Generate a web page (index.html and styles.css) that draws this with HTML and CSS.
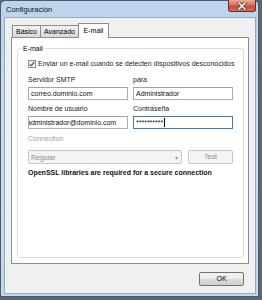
FILE: index.html
```html
<!DOCTYPE html>
<html>
	<head>
		<title>Configuración</title>
		<link rel="stylesheet" href="styles.css">
	</head>
	<body>
		<div class="window">
			<div class="titlebar">
				<span class="title">Configuración</span>
				<div class="close">
					<svg width="10" height="8" viewBox="0 0 10 8">
						<path d="M2 1 L8 7 M8 1 L2 7" stroke="#5a2a22" stroke-width="3" stroke-linecap="square"/>
						<path d="M2 1 L8 7 M8 1 L2 7" stroke="#ffffff" stroke-width="1.6" stroke-linecap="square"/>
					</svg>
				</div>
			</div>

			<div class="client">
				<div class="tabs">
					<div class="tab">Básico</div>
					<div class="tab">Avanzado</div>
					<div class="tab active">E-mail</div>
				</div>

				<div class="panel">
					<fieldset class="group">
						<legend>E-mail</legend>

						<div class="check">
							<span class="box">
								<svg width="6" height="6" viewBox="0 0 6 6">
									<path d="M0.8 3.2 L2.4 4.8 L5.3 0.8" stroke="#4a5f97" stroke-width="1.3" fill="none"/>
								</svg>
							</span>
							<span>Enviar un e-mail cuando se detecten dispositivos desconocidos</span>
						</div>

						<div class="fields">
							<div class="field">
								<div class="label">Servidor SMTP</div>
								<div class="input">correo.dominio.com</div>
							</div>
							<div class="field">
								<div class="label">para</div>
								<div class="input">Administrador</div>
							</div>
							<div class="field second">
								<div class="label">Nombre de usuario</div>
								<div class="input"><span class="scrolled">administrador@dominio.com</span></div>
							</div>
							<div class="field second">
								<div class="label">Contraseña</div>
								<div class="input focus">**********<span class="caret"></span></div>
							</div>
						</div>

						<div class="label disabled conn">Connection</div>
						<div class="conn-row">
							<div class="select">
								<span>Regular</span>
								<span class="arrow">▾</span>
							</div>
							<div class="button disabled">Test</div>
						</div>

						<div class="note">OpenSSL libraries are required for a secure connection</div>
					</fieldset>
				</div>

				<div class="footer">
					<div class="button ok">OK</div>
				</div>
			</div>
		</div>
	</body>
</html>
```

FILE: styles.css
```css
body {
	margin: 0;
	background: #5d6772;
	font-family: 'Liberation Sans', Arial, sans-serif;
	font-size: 7px;
	color: #000;
}

.window {
	box-sizing: border-box;
	width: 259px;
	height: 297px;
	border: 1px solid #4f5a68;
	border-radius: 5px 5px 0 0;
	padding: 0 2px 2px 3px;
	background: linear-gradient(#bcd3ec, #cadcf0 40%, #c3d7ee);
}

.titlebar {
	height: 16px;
	display: flex;
	align-items: center;
	justify-content: space-between;
	padding-left: 2px;
}

.title {
	font-size: 7.5px;
	color: #111;
}

.close {
	align-self: flex-start;
	margin-top: -1px;
	box-sizing: border-box;
	width: 28px;
	height: 12px;
	border: 1px solid #6b2b22;
	border-top: none;
	border-radius: 0 0 3px 3px;
	background: linear-gradient(#e9a99b, #d6725f 45%, #c54a35 55%, #d3705a);
	display: flex;
	align-items: center;
	justify-content: center;
}

.client {
	box-sizing: border-box;
	height: 277px;
	border: 1px solid #93a8c2;
	background: #f0f0f0;
	padding: 5px 6px 0 6px;
}

.tabs {
	height: 14px;
	display: flex;
	align-items: flex-end;
	padding-left: 1px;
}

.tab {
	box-sizing: border-box;
	height: 12px;
	line-height: 11px;
	text-align: center;
	border: 1px solid #898c95;
	border-bottom: none;
	background: linear-gradient(#f3f3f3, #e6e6e6 50%, #dadada);
	width: 29px;
}

.tab + .tab {
	border-left: none;
	width: 38px;
}

.tab.active {
	position: relative;
	height: 15px;
	margin-bottom: -1px;
	margin-left: -1px;
	width: 31px;
	border-left: 1px solid #898c95;
	background: #fff;
	line-height: 13px;
}

.panel {
	box-sizing: border-box;
	height: 227px;
	border: 1px solid #898c95;
	background: #fff;
	padding: 0 4px 0 5px;
}

.group {
	box-sizing: border-box;
	height: 214px;
	margin: 6px 0 0 0;
	padding: 0 9px 0 10px;
	border: 1px solid #d5dfe5;
	border-radius: 3px;
	min-width: 0;
}

.group legend {
	padding: 0 1px;
	margin-left: -6px;
	line-height: 9px;
}

.check {
	margin-top: 6px;
	height: 9px;
	display: flex;
	align-items: center;
	gap: 2px;
	white-space: nowrap;
	color: #1a1a1a;
}

.box {
	box-sizing: border-box;
	width: 8px;
	height: 8px;
	border: 1px solid #8e8f8f;
	background: linear-gradient(#e8e8e8, #fafafa);
	display: flex;
	align-items: center;
	justify-content: center;
}

.fields {
	display: grid;
	grid-template-columns: 100px 100px;
	column-gap: 5px;
}

.label {
	line-height: 10px;
	margin-top: 7px;
	color: #1a1a1a;
}

.field.second .label {
	margin-top: 4px;
}

.input {
	box-sizing: border-box;
	height: 13px;
	margin-top: 2px;
	border: 1px solid #abadb3;
	border-top-color: #a0a2a8;
	padding: 0 2px;
	line-height: 11px;
	white-space: nowrap;
	overflow: hidden;
	color: #111;
}

.input.focus {
	border-color: #3d7bad;
	display: flex;
	align-items: center;
}

.scrolled {
	margin-left: -4px;
}

.caret {
	width: 1px;
	height: 9px;
	margin-left: 1px;
	background: #000;
}

.label.disabled {
	color: #a0a0a0;
}

.label.conn {
	margin-top: 5px;
}

.conn-row {
	margin-top: 6px;
	display: flex;
	gap: 6px;
}

.select {
	box-sizing: border-box;
	width: 154px;
	height: 14px;
	border: 1px solid #c5c5c5;
	border-radius: 2px;
	background: #f4f4f4;
	color: #8d8d8d;
	display: flex;
	align-items: center;
	justify-content: space-between;
	padding: 0 3px 0 2px;
}

.arrow {
	font-size: 6px;
	color: #9a9a9a;
}

.button {
	box-sizing: border-box;
	height: 14px;
	line-height: 12px;
	text-align: center;
	border: 1px solid #707070;
	border-radius: 2px;
	background: linear-gradient(#f2f2f2, #ebebeb 50%, #dddddd 51%, #cfcfcf);
}

.button.disabled {
	width: 45px;
	border-color: #c5c5c5;
	background: #f4f4f4;
	color: #8d8d8d;
}

.note {
	margin-top: 4px;
	line-height: 10px;
	font-weight: bold;
	color: #111;
}

.footer {
	margin-top: 8px;
	padding-right: 5px;
	display: flex;
	justify-content: flex-end;
}

.button.ok {
	width: 45px;
}
```
